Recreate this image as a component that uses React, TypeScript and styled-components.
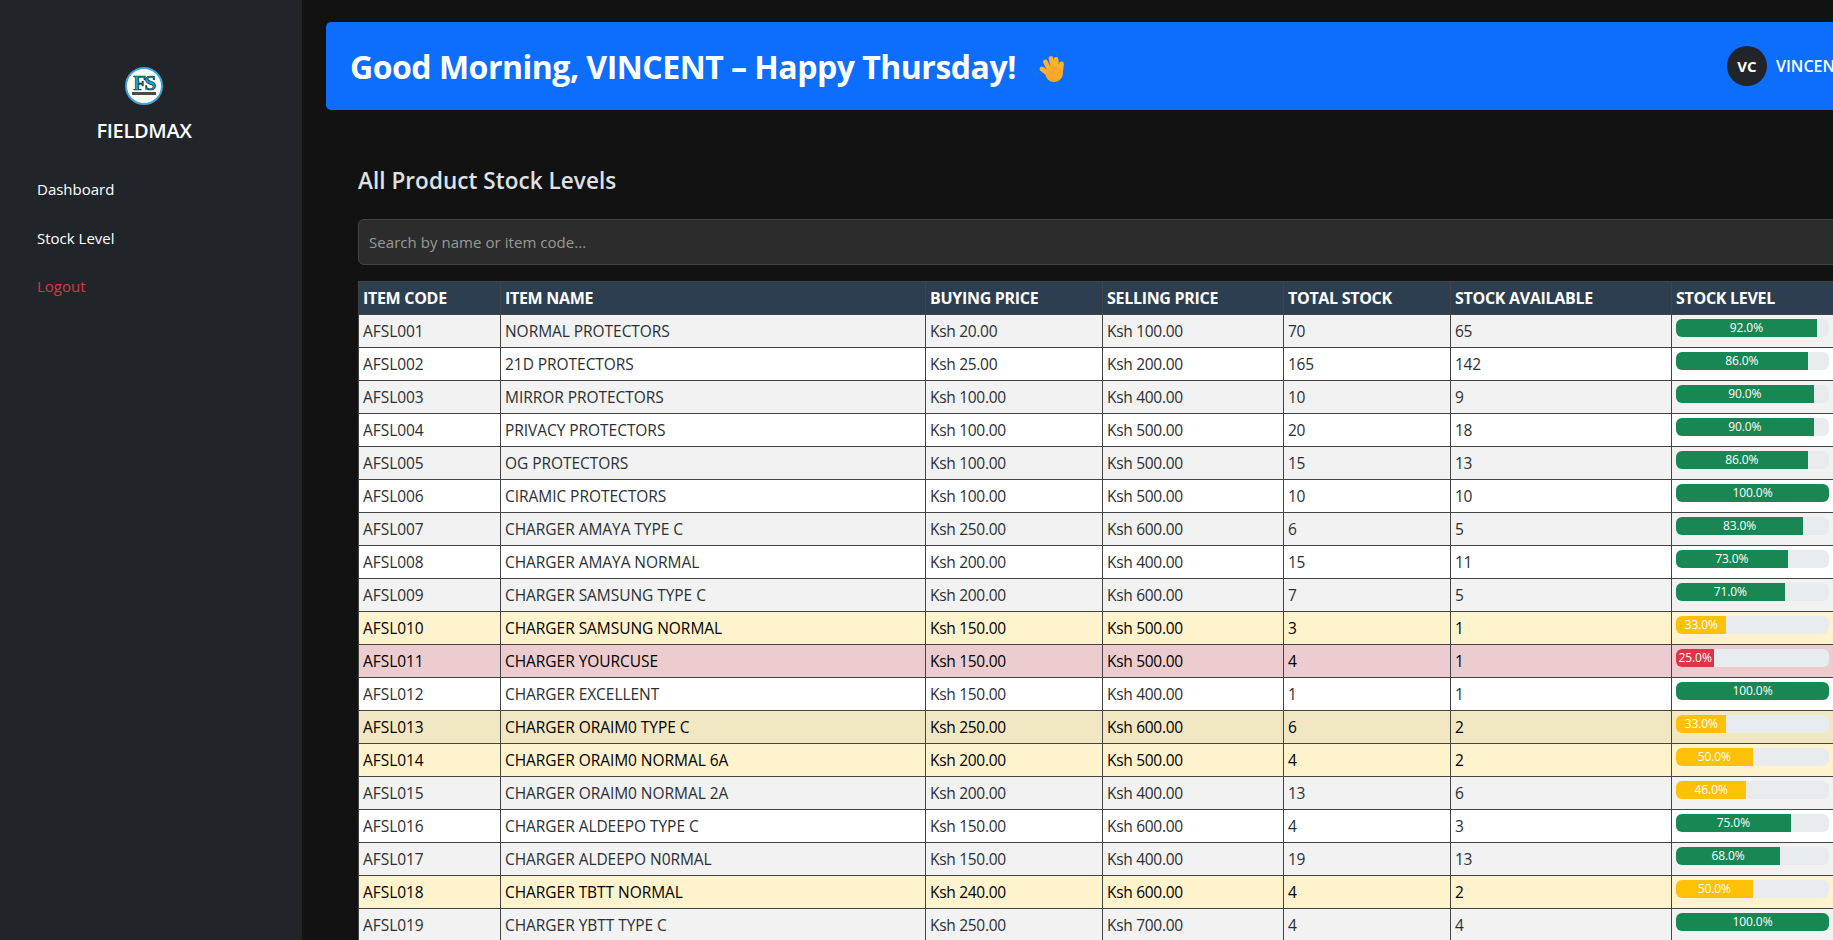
import { FC } from 'react';
import styled, { createGlobalStyle } from 'styled-components';

const FONT = `'Open Sans', 'Noto Sans', 'Liberation Sans', sans-serif`;

const GlobalStyle = createGlobalStyle`
  html, body {
    margin: 0;
    height: 100%;
    overflow: hidden;
    background: #121212;
    font-family: ${FONT};
  }
  * {
    box-sizing: border-box;
  }
`;

const Layout = styled.div`
  display: flex;
  width: 100vw;
  height: 100vh;
  overflow: hidden;
`;

const Sidebar = styled.aside`
  flex: 0 0 302px;
  height: 100%;
  padding: 67px 14px 0 0;
  background: #212529;
  display: flex;
  flex-direction: column;
`;

const Brand = styled.div`
  display: flex;
  flex-direction: column;
  align-items: center;
  gap: 12px;
  margin-bottom: 32px;
`;

const LogoWrap = styled.div`
  width: 38px;
  height: 38px;
  border-radius: 50%;
  background: #fff;
  border: 2px solid #3fa3dc;
  display: flex;
  align-items: center;
  justify-content: center;
`;

const BrandName = styled.div`
  color: #fff;
  font-size: 20px;
  line-height: 28px;
  font-weight: 600;
  letter-spacing: -0.3px;
`;

const Nav = styled.nav`
  display: flex;
  flex-direction: column;
  gap: 24.5px;
  padding-left: 37px;
`;

const NavLink = styled.a<{ $danger?: boolean }>`
  color: ${p => (p.$danger ? '#dc3545' : '#fff')};
  font-size: 15px;
  line-height: 24px;
  text-decoration: none;
`;

const Main = styled.main`
  flex: 1;
  min-width: 0;
  padding: 22px 0 0 24px;
  overflow: hidden;
`;

const Banner = styled.header`
  width: 1600px;
  height: 88px;
  padding-left: 24px;
  display: flex;
  align-items: center;
  background: #0d6efd;
  border-radius: 5px;
`;

const Greeting = styled.div`
  flex: 0 0 1377px;
  display: flex;
  align-items: center;
  gap: 16px;
`;

const GreetingText = styled.h1`
  margin: 0;
  padding-top: 2px;
  color: #fff;
  font-size: 32px;
  line-height: 40px;
  font-weight: 700;
  letter-spacing: -0.49px;
  white-space: nowrap;
`;

const User = styled.div`
  display: flex;
  align-items: center;
  gap: 9px;
`;

const Avatar = styled.div`
  width: 40px;
  height: 40px;
  border-radius: 50%;
  background: #212529;
  color: #fff;
  font-size: 15px;
  font-weight: 700;
  display: flex;
  align-items: center;
  justify-content: center;
`;

const UserName = styled.span`
  color: #fff;
  font-size: 16px;
  font-weight: 600;
  white-space: nowrap;
`;

const Content = styled.section`
  padding: 55px 0 0 32px;
`;

const Title = styled.h2`
  margin: 0 0 22px;
  color: #dee2e6;
  font-size: 22.5px;
  line-height: 32px;
  font-weight: 600;
  letter-spacing: 0.05px;
`;

const Search = styled.input`
  display: block;
  width: 1520px;
  height: 46px;
  padding: 0 10px;
  margin-bottom: 16px;
  background: #2c2c2c;
  border: 1px solid #444;
  border-radius: 6px;
  color: #fff;
  font-family: ${FONT};
  font-size: 15px;
  letter-spacing: 0.05px;
  &::placeholder {
    color: #9a9a9a;
    opacity: 1;
  }
`;

const Table = styled.table`
  width: 1475px;
  table-layout: fixed;
  border-collapse: collapse;
  font-size: 15.5px;
`;

const HeadCell = styled.th`
  padding: 4px;
  height: 33px;
  background: #2c3e50;
  border: 1px solid #444;
  color: #fff;
  font-size: 16px;
  line-height: 24px;
  font-weight: 700;
  text-align: left;
  text-transform: uppercase;
  letter-spacing: -0.3px;
  white-space: nowrap;
  overflow: hidden;
`;

type Tone = 'plain' | 'warning' | 'danger';

const cellColors: Record<Tone, { even: string; odd: string; text: string }> = {
  plain: { odd: '#f2f2f2', even: '#ffffff', text: '#2b2f33' },
  warning: { odd: '#f2e7c3', even: '#fff3cd', text: '#000000' },
  danger: { odd: '#eccccf', even: '#f8d7da', text: '#000000' },
};

const Cell = styled.td<{ $tone: Tone; $odd: boolean; $numeric?: boolean }>`
  padding: 4px;
  height: 33px;
  border: 1px solid #444;
  line-height: 24px;
  letter-spacing: ${p => (p.$numeric ? '-0.3px' : '-0.05px')};
  white-space: nowrap;
  vertical-align: top;
  background: ${p => (p.$odd ? cellColors[p.$tone].odd : cellColors[p.$tone].even)};
  color: ${p => cellColors[p.$tone].text};
`;

const Progress = styled.div`
  height: 18px;
  background: #e9ecef;
  border-radius: 6px;
  overflow: hidden;
  display: flex;
`;

const Fill = styled.div<{ $color: string }>`
  background: ${p => p.$color};
  color: #fff;
  font-size: 12px;
  line-height: 18px;
  letter-spacing: -0.1px;
  text-align: center;
  white-space: nowrap;
`;

const Logo = () => (
  <svg width="30" height="26" viewBox="0 0 30 26" overflow="visible">
    <text
      x="15"
      y="17"
      textAnchor="middle"
      fontFamily="'Liberation Serif', serif"
      fontWeight="700"
      fontSize="21"
      letterSpacing="-1.5"
      fill="#08aed6"
      stroke="#1c1c1c"
      strokeWidth="0.7"
    >
      FS
    </text>
    <rect x="3" y="19" width="24" height="3" fill="#4a4a4a" />
  </svg>
);

const WaveHand = () => (
  <svg width="36" height="35" viewBox="0 0 36 35">
    <path d="M20 2.500c3 .8 5 3 6 6M0 18c.2 3.500 2 6.500 5 8.500" fill="none" stroke="#1f78c9" strokeWidth="1.300" strokeLinecap="round" />
    <g fill="none" stroke="#ffb02e" strokeWidth="4.800" strokeLinecap="round">
      <path d="M18 26 10 20" />
      <path d="M19 24 13.500 13" />
      <path d="M22 22 19 9.500" />
      <path d="M25 22 24 10.500" />
      <path d="M28 27 29.500 15" />
    </g>
    <ellipse cx="22" cy="25" rx="8.500" ry="8" fill="#fba82a" />
  </svg>
);

type Row = {
  code: string;
  name: string;
  buy: string;
  sell: string;
  total: number;
  available: number;
  level: number;
  tone: Tone;
};

const make = (n: number, name: string, buy: number, sell: number, total: number, available: number, level: number, tone: Tone = 'plain'): Row => ({
  code: `AFSL${String(n).padStart(3, '0')}`,
  name,
  buy: `Ksh ${buy.toFixed(2)}`,
  sell: `Ksh ${sell.toFixed(2)}`,
  total,
  available,
  level,
  tone,
});

const rows: Row[] = [
  make(1, 'NORMAL PROTECTORS', 20, 100, 70, 65, 92),
  make(2, '21D PROTECTORS', 25, 200, 165, 142, 86),
  make(3, 'MIRROR PROTECTORS', 100, 400, 10, 9, 90),
  make(4, 'PRIVACY PROTECTORS', 100, 500, 20, 18, 90),
  make(5, 'OG PROTECTORS', 100, 500, 15, 13, 86),
  make(6, 'CIRAMIC PROTECTORS', 100, 500, 10, 10, 100),
  make(7, 'CHARGER AMAYA TYPE C', 250, 600, 6, 5, 83),
  make(8, 'CHARGER AMAYA NORMAL', 200, 400, 15, 11, 73),
  make(9, 'CHARGER SAMSUNG TYPE C', 200, 600, 7, 5, 71),
  make(10, 'CHARGER SAMSUNG NORMAL', 150, 500, 3, 1, 33, 'warning'),
  make(11, 'CHARGER YOURCUSE', 150, 500, 4, 1, 25, 'danger'),
  make(12, 'CHARGER EXCELLENT', 150, 400, 1, 1, 100),
  make(13, 'CHARGER ORAIM0 TYPE C', 250, 600, 6, 2, 33, 'warning'),
  make(14, 'CHARGER ORAIM0 NORMAL 6A', 200, 500, 4, 2, 50, 'warning'),
  make(15, 'CHARGER ORAIM0 NORMAL 2A', 200, 400, 13, 6, 46),
  make(16, 'CHARGER ALDEEPO TYPE C', 150, 600, 4, 3, 75),
  make(17, 'CHARGER ALDEEPO N0RMAL', 150, 400, 19, 13, 68),
  make(18, 'CHARGER TBTT NORMAL', 240, 600, 4, 2, 50, 'warning'),
  make(19, 'CHARGER YBTT TYPE C', 250, 700, 4, 4, 100),
];

const columns = [
  { label: 'Item Code', width: 142 },
  { label: 'Item Name', width: 425 },
  { label: 'Buying Price', width: 177 },
  { label: 'Selling Price', width: 181 },
  { label: 'Total Stock', width: 167 },
  { label: 'Stock Available', width: 221 },
  { label: 'Stock Level', width: 162 },
];

const levelColor = (level: number) => {
  if (level < 30) return '#dc3545';
  if (level < 60) return '#ffc107';
  return '#198754';
};

const App: FC = () => (
  <Layout>
    <GlobalStyle />
    <Sidebar>
      <Brand>
        <LogoWrap>
          <Logo />
        </LogoWrap>
        <BrandName>FIELDMAX</BrandName>
      </Brand>
      <Nav>
        <NavLink href="#">Dashboard</NavLink>
        <NavLink href="#">Stock Level</NavLink>
        <NavLink href="#" $danger>
          Logout
        </NavLink>
      </Nav>
    </Sidebar>
    <Main>
      <Banner>
        <Greeting>
          <GreetingText>Good Morning, VINCENT – Happy Thursday!</GreetingText>
          <WaveHand />
        </Greeting>
        <User>
          <Avatar>VC</Avatar>
          <UserName>VINCENT</UserName>
        </User>
      </Banner>
      <Content>
        <Title>All Product Stock Levels</Title>
        <Search placeholder="Search by name or item code..." />
        <Table>
          <colgroup>
            {columns.map(col => (
              <col key={col.label} width={col.width} />
            ))}
          </colgroup>
          <thead>
            <tr>
              {columns.map(col => (
                <HeadCell key={col.label}>{col.label}</HeadCell>
              ))}
            </tr>
          </thead>
          <tbody>
            {rows.map((row, i) => {
              const cellProps = { $tone: row.tone, $odd: i % 2 === 0 };
              return (
                <tr key={row.code}>
                  <Cell {...cellProps}>{row.code}</Cell>
                  <Cell {...cellProps}>{row.name}</Cell>
                  <Cell {...cellProps} $numeric>{row.buy}</Cell>
                  <Cell {...cellProps} $numeric>{row.sell}</Cell>
                  <Cell {...cellProps} $numeric>{row.total}</Cell>
                  <Cell {...cellProps} $numeric>{row.available}</Cell>
                  <Cell {...cellProps}>
                    <Progress>
                      <Fill $color={levelColor(row.level)} style={{ width: `${row.level}%` }}>
                        {row.level.toFixed(1)}%
                      </Fill>
                    </Progress>
                  </Cell>
                </tr>
              );
            })}
          </tbody>
        </Table>
      </Content>
    </Main>
  </Layout>
);

export default App;
